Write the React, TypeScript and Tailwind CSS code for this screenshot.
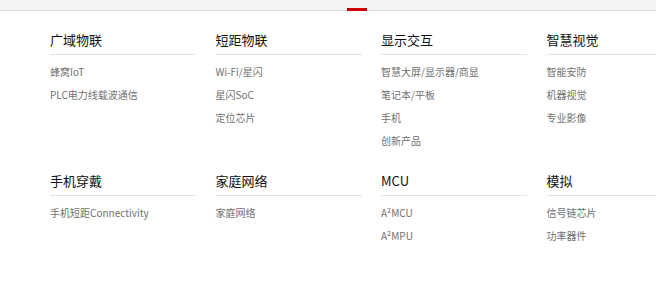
const groups = [
  { title: "广域物联", items: ["蜂窝IoT", "PLC电力线载波通信"] },
  { title: "短距物联", items: ["Wi-Fi/星闪", "星闪SoC", "定位芯片"] },
  { title: "显示交互", items: ["智慧大屏/显示器/商显", "笔记本/平板", "手机", "创新产品"] },
  { title: "智慧视觉", items: ["智能安防", "机器视觉", "专业影像"] },
  { title: "手机穿戴", items: ["手机短距Connectivity"] },
  { title: "家庭网络", items: ["家庭网络"] },
  { title: "MCU", items: ["A²MCU", "A²MPU"] },
  { title: "模拟", items: ["信号链芯片", "功率器件"] },
];

export default function App() {
  return (
    <div
      className="w-[656px] h-[290px] overflow-hidden bg-white"
      style={{ fontFamily: '"Noto Sans CJK SC", "Noto Sans", sans-serif' }}
    >
      <div className="relative h-[11px] bg-[#f4f4f4] border-b border-[#dcdcdc]">
        <span className="absolute left-[347px] top-[8px] w-[20px] h-[3px] bg-[#cc0000]" />
      </div>

      <div className="pl-[50px] pt-[17px] grid grid-cols-[repeat(4,146px)] gap-x-[19.5px] gap-y-[17px] w-[720px]">
        {groups.map((g) => (
          <div key={g.title}>
            <div className="text-[13px] leading-[24px] font-normal text-[#111] pb-[2px] border-b border-[#e4e4e4]">
              {g.title}
            </div>
            <ul className="mt-[5px]">
              {g.items.map((it) => (
                <li key={it} className="text-[10px] leading-[23px] text-[#707070]">
                  {it}
                </li>
              ))}
            </ul>
          </div>
        ))}
      </div>
    </div>
  );
}
